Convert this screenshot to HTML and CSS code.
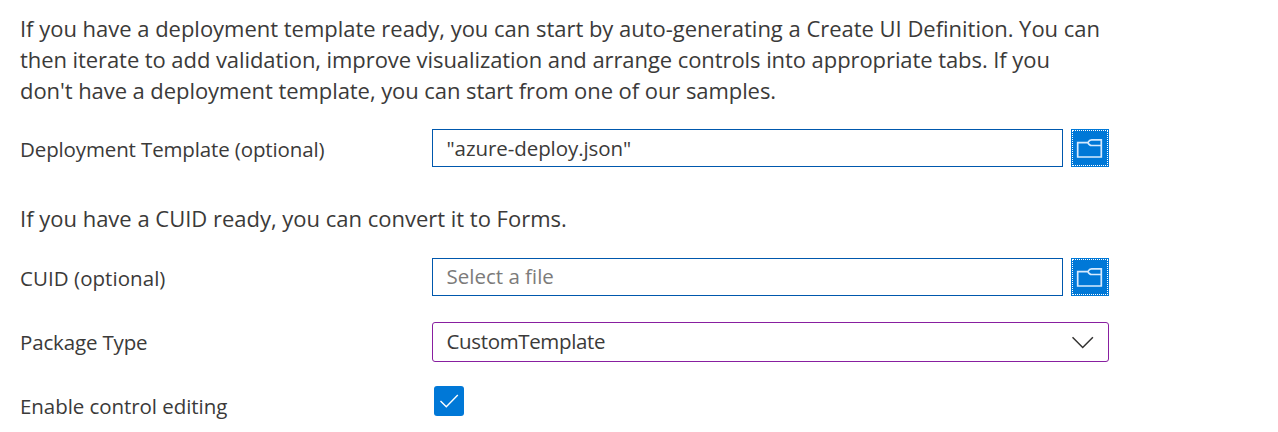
FILE: index.html
```html
<!DOCTYPE html>
<html lang="en">
<head>
<meta charset="utf-8">
<title>Package settings</title>
<link rel="stylesheet" href="styles.css">
</head>
<body>
<main class="form">
  <p class="intro"><span class="line l1">If you have a deployment template ready, you can start by auto-generating a Create UI Definition. You can</span> <span class="line l2">then iterate to add validation, improve visualization and arrange controls into appropriate tabs. If you</span> <span class="line l3">don't have a deployment template, you can start from one of our samples.</span></p>
  <div class="row row-template">
    <div class="label"><span class="t-deploy">Deployment Template (optional)</span></div>
    <div class="control">
      <div class="input"><span class="t-json">"azure-deploy.json"</span></div>
      <div class="browse"><svg width="36" height="36" viewBox="0 0 36 36"><path d="M15.8 12.6H5.7V27H29.3V9.8H19.5C17.8 9.8 16.8 11 15.8 12.6C16.8 14.5 17.8 15.5 19.5 15.5H29.3" /></svg></div>
    </div>
  </div>
  <p class="note"><span class="line l4">If you have a CUID ready, you can convert it to Forms.</span></p>
  <div class="row row-cuid">
    <div class="label"><span class="t-cuid">CUID (optional)</span></div>
    <div class="control">
      <div class="input placeholder"><span class="t-select">Select a file</span></div>
      <div class="browse"><svg width="36" height="36" viewBox="0 0 36 36"><path d="M15.8 12.6H5.7V27H29.3V9.8H19.5C17.8 9.8 16.8 11 15.8 12.6C16.8 14.5 17.8 15.5 19.5 15.5H29.3" /></svg></div>
    </div>
  </div>
  <div class="row row-package">
    <div class="label"><span class="t-package">Package Type</span></div>
    <div class="select"><span class="t-custom">CustomTemplate</span><svg class="chevron" width="22" height="14" viewBox="0 0 22 14"><path d="M0.5 2.3L10.7 12.5L20.9 2.3" /></svg></div>
  </div>
  <div class="row row-editing">
    <div class="label"><span class="t-enable">Enable control editing</span></div>
    <div class="checkbox"><svg width="30" height="30" viewBox="0 0 30 30"><path d="M6.5 15L12.3 20.7L23.8 8.9" /></svg></div>
  </div>
</main>
</body>
</html>
```
FILE: styles.css
```css
* { box-sizing: border-box; }
body { margin: 0; background: #fff; color: #3b3a39; font-family: "Open Sans", "Noto Sans", sans-serif; }
.form { width: 1129px; height: 432px; padding: 13px 20px 0; }
p { margin: 0; font-size: 22px; line-height: 31px; }
.line { display: block; width: max-content; white-space: nowrap; }
.l1 { letter-spacing: -0.02px; }
.l2 { letter-spacing: -0.075px; }
.l3 { letter-spacing: -0.07px; }
.l4 { letter-spacing: -0.01px; }
.row { display: grid; grid-template-columns: 412px 677px; font-size: 20.5px; white-space: nowrap; }
.row-template { margin-top: 23px; height: 38px; }
.note { margin-top: 36px; }
.row-cuid { margin-top: 24px; height: 38px; }
.row-package { margin-top: 26px; height: 40px; }
.row-editing { margin-top: 24px; height: 40px; }
.label { line-height: 30px; padding-top: 5px; }
.t-deploy { letter-spacing: -0.13px; }
.t-json { letter-spacing: -0.07px; }
.t-cuid { letter-spacing: 0.05px; }
.t-package { letter-spacing: -0.15px; }
.t-enable { letter-spacing: -0.06px; }
.control { display: flex; gap: 8px; }
.input { width: 631px; height: 38px; border: 1px solid #0058ad; padding-left: 13.5px; line-height: 36px; }
.input.placeholder { color: #7c7b7a; line-height: 34px; }
.browse { width: 38px; height: 38px; background: #0078d7; border: 1px solid #0078d7; outline: 1px dotted #fff; outline-offset: -2px; }
.browse svg { display: block; fill: none; stroke: #d5eaff; stroke-width: 1.7; }
.select { display: flex; align-items: center; justify-content: space-between; height: 40px; border: 1px solid #881fa0; border-radius: 3px; padding: 0 14px 0 13.5px; }
.t-custom { line-height: 36px; padding-bottom: 2px; letter-spacing: -0.35px; }
.chevron { fill: none; stroke: #323130; stroke-width: 1.5; }
.checkbox { width: 30px; height: 30px; margin-left: 2px; border-radius: 3px; background: #0078d7; }
.checkbox svg { display: block; fill: none; stroke: #fff; stroke-width: 1.4; }
```
